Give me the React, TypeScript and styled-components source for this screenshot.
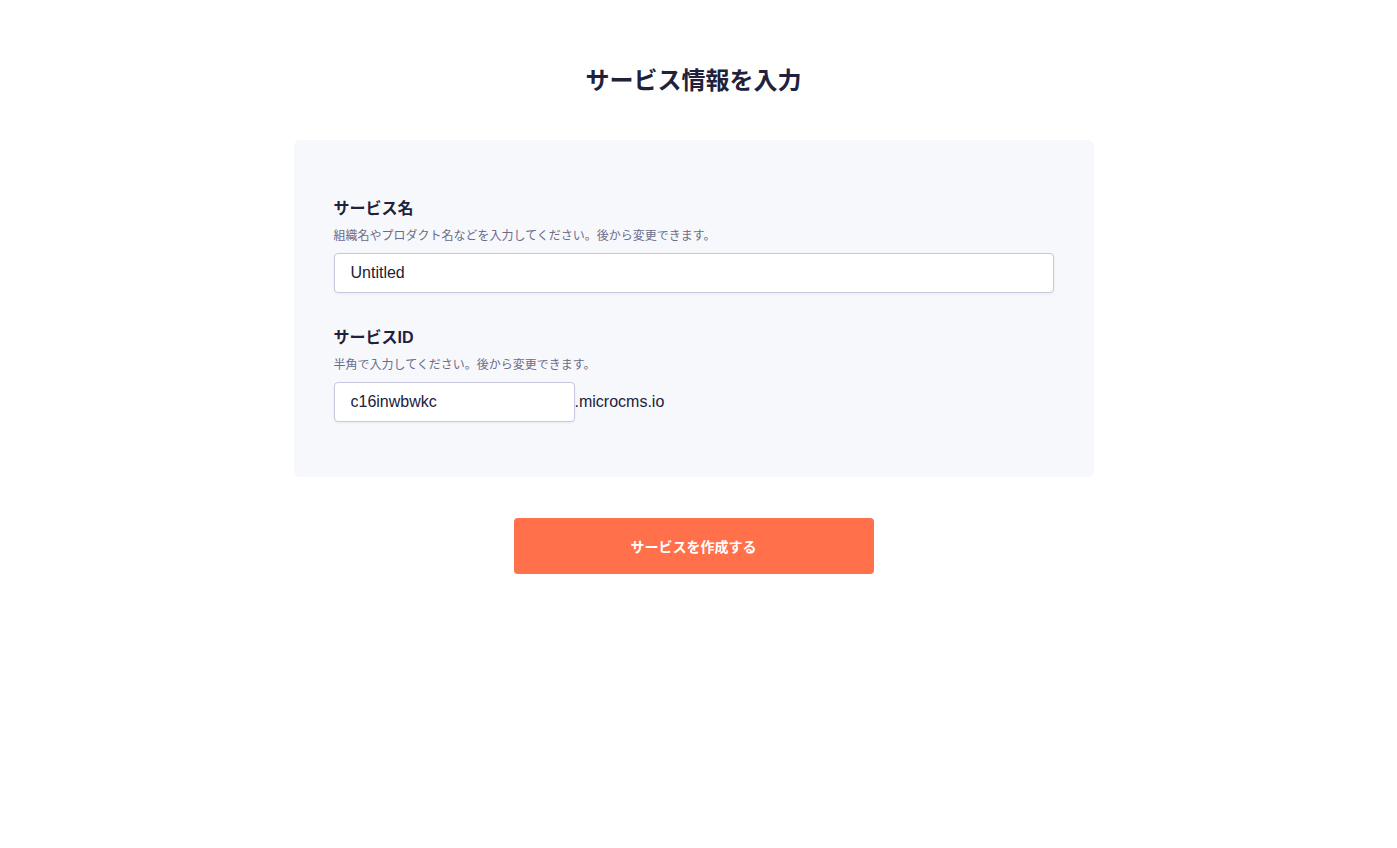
import styled, { createGlobalStyle } from "styled-components";

const GlobalStyle = createGlobalStyle`
  body {
    margin: 0;
    background: #fff;
    font-family: "Liberation Sans", "Noto Sans CJK JP", sans-serif;
    color: #21213b;
  }
`;

const App = () => {
  return (
    <>
      <GlobalStyle />
      <Page>
        <Title>サービス情報を入力</Title>
        <Card>
          <Field>
            <Label>サービス名</Label>
            <Description>
              組織名やプロダクト名などを入力してください。後から変更できます。
            </Description>
            <Input defaultValue="Untitled" />
          </Field>
          <Field>
            <Label>サービスID</Label>
            <Description>半角で入力してください。後から変更できます。</Description>
            <IdRow>
              <Input defaultValue="c16inwbwkc" width={241} />
              <Domain>.microcms.io</Domain>
            </IdRow>
          </Field>
        </Card>
        <SubmitButton>サービスを作成する</SubmitButton>
      </Page>
    </>
  );
};

export default App;

const Page = styled.div`
  display: flex;
  flex-direction: column;
  align-items: center;
  padding: 63px 10px 0 0;
`;

const Title = styled.h1`
  margin: 0;
  font-size: 24px;
  line-height: 36px;
  font-weight: bold;
  color: #21213b;
`;

const Card = styled.div`
  box-sizing: border-box;
  width: 800px;
  margin-top: 41px;
  padding: 57px 40px 55px;
  background: #f7f8fb;
  border-radius: 6px;
  display: flex;
  flex-direction: column;
  gap: 33px;
`;

const Field = styled.div`
  display: flex;
  flex-direction: column;
`;

const Label = styled.label`
  font-size: 16px;
  line-height: 24px;
  font-weight: bold;
  color: #21213b;
`;

const Description = styled.p`
  margin: 6px 0 8px;
  font-size: 12px;
  line-height: 18px;
  color: #6b6b8a;
`;

const IdRow = styled.div`
  display: flex;
  align-items: center;
`;

const Input = styled.input<{ width?: number }>`
  box-sizing: border-box;
  width: ${({ width }) => (width ? `${width}px` : "100%")};
  height: 40px;
  padding: 0 16px;
  border: 1px solid #c9c6df;
  border-radius: 4px;
  background: #fff;
  box-shadow: 0 1px 3px rgba(33, 33, 59, 0.06);
  font-family: "Liberation Sans", "Noto Sans CJK JP", sans-serif;
  font-size: 16px;
  color: #21213b;
  outline: none;
`;

const Domain = styled.span`
  font-size: 16px;
  color: #21213b;
  margin-top: -1px;
`;

const SubmitButton = styled.button`
  margin-top: 41px;
  width: 360px;
  height: 56px;
  border: none;
  border-radius: 4px;
  background: #ff704b;
  color: #fff;
  font-family: "Liberation Sans", "Noto Sans CJK JP", sans-serif;
  font-size: 14px;
  font-weight: bold;
  cursor: pointer;
`;
